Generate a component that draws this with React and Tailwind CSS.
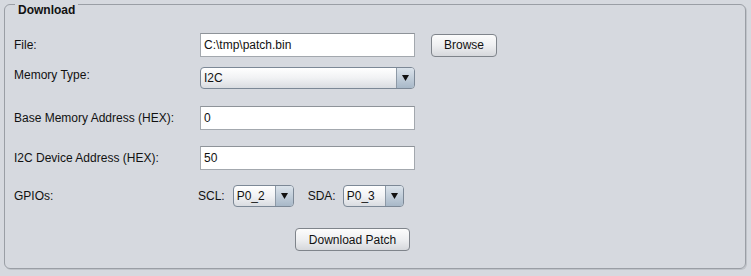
import React from 'react'

const font = { fontFamily: '"Liberation Sans", Arial, sans-serif' }

function TextField({ value, className = '' }) {
  return (
    <div
      className={`h-[24px] bg-white border border-[#a3a8ae] border-t-[#8e9399] flex items-center pl-[3px] text-[12px] text-[#111] ${className}`}
    >
      {value}
    </div>
  )
}

function Combo({ value, className = '' }) {
  return (
    <div
      className={`h-[22px] flex rounded-[4px] border border-[#7c8896] overflow-hidden bg-gradient-to-b from-white via-[#f1f2f4] to-[#d9dce1] ${className}`}
    >
      <div className="flex-1 flex items-center pl-[3px] text-[12px] text-[#111]">{value}</div>
      <div className="w-[18px] border-l border-[#8d99a6] bg-gradient-to-b from-[#dbe3eb] to-[#a8b8c8] flex items-center justify-center">
        <svg width="7" height="6" viewBox="0 0 7 6">
          <path d="M0 0 L7 0 L3.5 6 Z" fill="#111" />
        </svg>
      </div>
    </div>
  )
}

function Button({ children, className = '' }) {
  return (
    <div
      className={`h-[23px] flex items-center justify-center rounded-[4px] border border-[#7f848b] bg-gradient-to-b from-[#fcfcfc] via-[#eeeff1] to-[#d6d8dc] text-[12px] text-[#111] ${className}`}
    >
      {children}
    </div>
  )
}

export default function App() {
  return (
    <div className="w-[751px] h-[276px] bg-[#d6d9df] pt-[4px] pl-[4px] overflow-hidden" style={font}>
      <div className="relative w-[742px] h-[265px] border border-[#9a9ea5] rounded-[6px] shadow-[1px_1px_0_#bfc3c9]">
        <span className="absolute left-[10px] top-[-3px] px-[3px] bg-[#d6d9df] text-[12px] leading-[16px] font-bold text-[#111]">
          Download
        </span>

        <div className="pl-[9px] pt-[28px] text-[12px] text-[#111]">
          <div className="flex items-center h-[24px]">
            <div className="w-[186px]">File:</div>
            <TextField value={'C:\\tmp\\patch.bin'} className="w-[215px]" />
            <Button className="w-[66px] ml-[16px]">Browse</Button>
          </div>

          <div className="flex items-start h-[22px] mt-[10px]">
            <div className="w-[186px] -mt-[1px]">Memory Type:</div>
            <Combo value="I2C" className="w-[215px]" />
          </div>

          <div className="flex items-center h-[24px] mt-[17px]">
            <div className="w-[186px]">Base Memory Address (HEX):</div>
            <TextField value="0" className="w-[215px]" />
          </div>

          <div className="flex items-center h-[24px] mt-[16px]">
            <div className="w-[186px]">I2C Device Address (HEX):</div>
            <TextField value="50" className="w-[215px]" />
          </div>

          <div className="flex items-center h-[22px] mt-[15px]">
            <div className="w-[184px]">GPIOs:</div>
            <span>SCL:</span>
            <Combo value="P0_2" className="w-[61px] ml-[8px]" />
            <span className="ml-[14px]">SDA:</span>
            <Combo value="P0_3" className="w-[61px] ml-[7px]" />
          </div>

          <div className="flex h-[23px] mt-[21px]">
            <Button className="w-[115px] ml-[281px]">Download Patch</Button>
          </div>
        </div>
      </div>
    </div>
  )
}
